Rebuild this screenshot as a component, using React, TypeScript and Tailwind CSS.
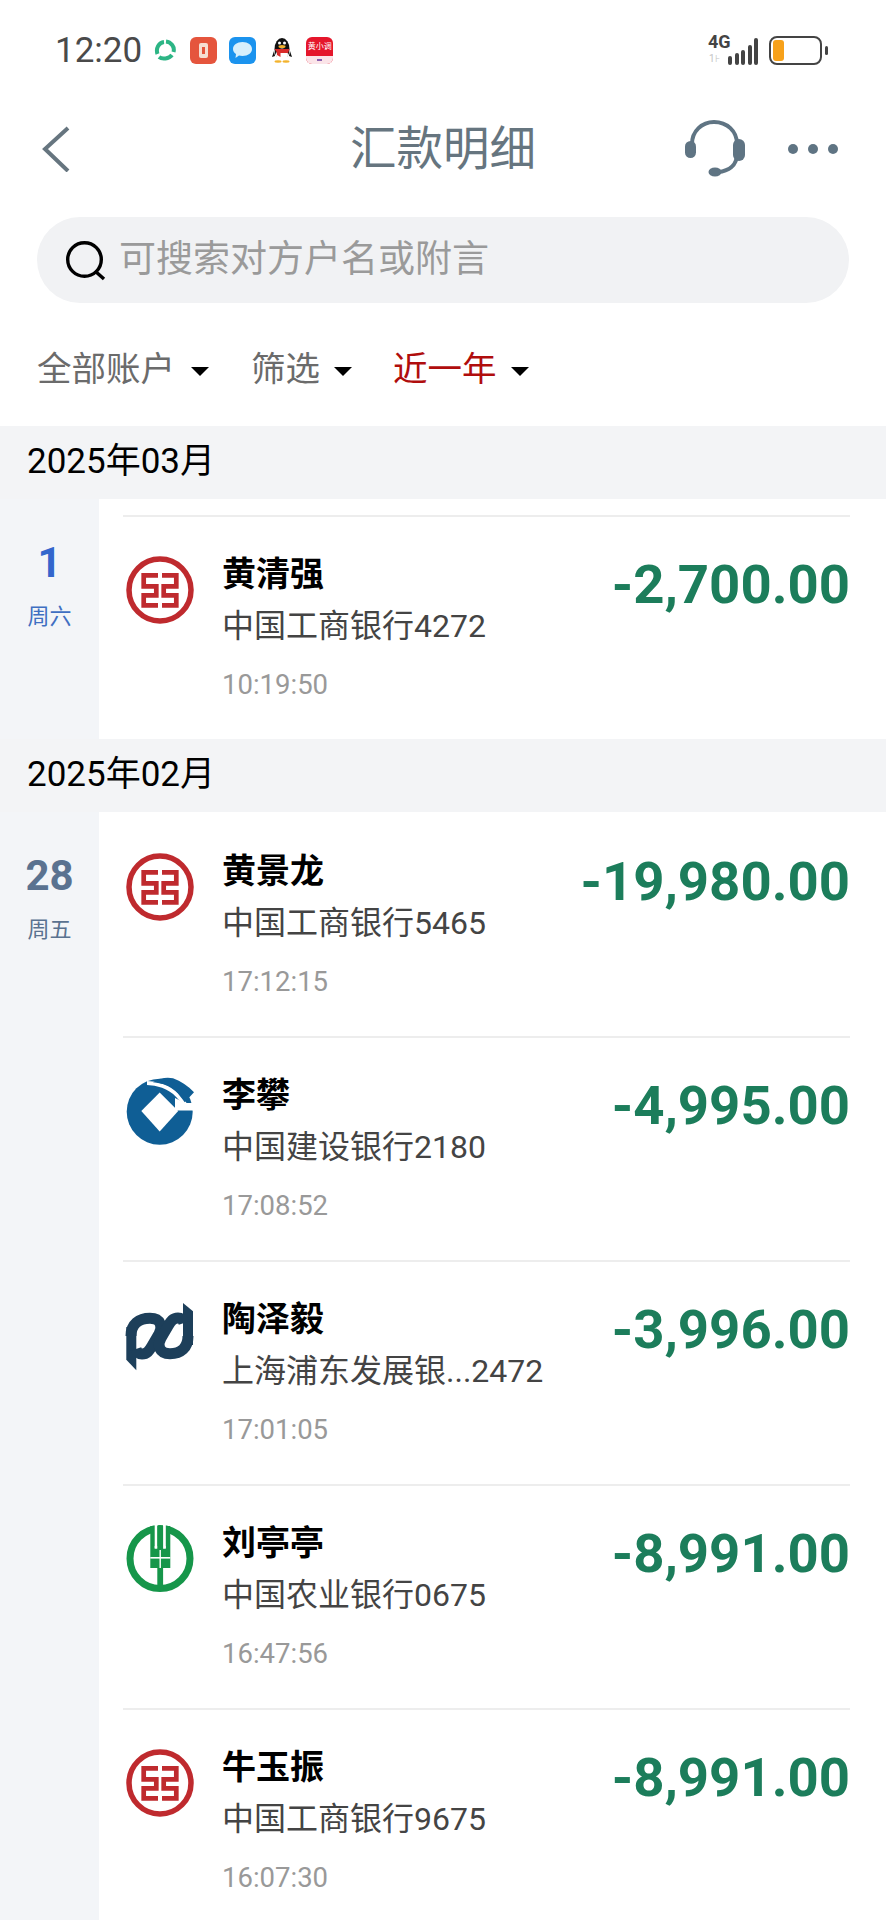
const FONT = "font-['Roboto','Noto_Sans_CJK_SC',sans-serif]";

function IcbcLogo() {
  return (
    <svg width="70" height="70" viewBox="0 0 70 70" fill="none">
      <circle cx="35" cy="35" r="31" stroke="#bf2a2e" strokeWidth="5.5" />
      <path
        d="M33 20.3H18.7V31.3H31.3V40.3H18.7V50.3H33M37 20.3H51.3V31.3H38.7V40.3H51.3V50.3H37"
        stroke="#bf2a2e"
        strokeWidth="4.7"
      />
    </svg>
  );
}

function CcbLogo() {
  return (
    <svg width="70" height="70" viewBox="0 0 70 70" fill="none">
      <circle cx="34.7" cy="35.7" r="33" fill="#0f5e95" />
      <path d="M50 22L60 27H72V34.5H50Z" fill="#fff" />
      <path d="M22 7C32 7 44 11 52 19L60 28" stroke="#fff" strokeWidth="4" />
      <path d="M28 6.3C34 2 42 1 48 2.3C56 5 63 10 69 16.3L59.7 26.3C54 18 48 11 43 9.7C38 7.5 33 7 28 6.3Z" fill="#0f5e95" />
      <path d="M34.7 16.5L53.2 35L34.7 55.5L16.3 35Z" fill="#fff" />
    </svg>
  );
}

function SpdbLogo() {
  return (
    <svg width="70" height="72" viewBox="0 0 70 72" fill="none">
      <path d="M1.3 27H11.3V70.3L1.3 59.7Z" fill="#1d3f5a" />
      <path d="M58 3L68 11.3V45H58Z" fill="#1d3f5a" />
      <path
        d="M6 36C6 24 14 18.3 25 18.3C36 18.3 38 27 34 34L27 46C24 51 22 54 17 54C14 54 12 52 11 49"
        stroke="#1d3f5a"
        strokeWidth="11"
      />
      <path
        d="M63 36C63 48 56 53.7 45 53.7C34 53.7 32 45 36 38L43 26C46 21 48 18 53 18C56 18 58 20 59 23"
        stroke="#1d3f5a"
        strokeWidth="11"
      />
    </svg>
  );
}

function AbcLogo() {
  return (
    <svg width="70" height="70" viewBox="0 0 70 70">
      <circle cx="35" cy="34.5" r="30" fill="none" stroke="#16964a" strokeWidth="7" />
      <rect x="25.3" y="2" width="20" height="42" fill="#16964a" />
      <rect x="29.7" y="1" width="2.8" height="23.5" fill="#fff" />
      <rect x="38" y="1" width="2.8" height="23.5" fill="#fff" />
      <rect x="29.7" y="22" width="11" height="2.5" fill="#fff" />
      <rect x="32.3" y="2" width="5.8" height="24" fill="#16964a" />
      <rect x="32.3" y="43" width="5.8" height="24" fill="#16964a" />
      <rect x="25.3" y="33" width="20" height="1.6" fill="#fff" />
      <rect x="34.5" y="26" width="1.4" height="18" fill="#fff" />
    </svg>
  );
}

function StatusIcons() {
  return (
    <div className="flex items-center ml-[12px]">
      <svg width="22" height="22" viewBox="0 0 22 22" fill="none" stroke="#2db585" strokeWidth="4">
        <path d="M3.5 15C1.5 9 5 3.5 10 3" />
        <path d="M12 2.5C17 3 21 8 19.5 13" />
        <path d="M18 16C15 20 8 20.5 5 18" />
      </svg>
      <div className="ml-[14px] w-[27px] h-[27px] rounded-[6px] bg-[#e5553d] flex items-center justify-center">
        <div className="w-[9px] h-[15px] rounded-[2px] bg-[#f6ded3] flex items-center justify-center">
          <div className="w-[3px] h-[7px] bg-[#e5553d]" />
        </div>
      </div>
      <div className="ml-[12px] w-[27px] h-[27px] rounded-[6px] bg-[#1b93ee] flex items-center justify-center">
        <svg width="21" height="18" viewBox="0 0 21 18">
          <path d="M10.5 1C16 1 20 4 20 8C20 12 16 15 10.5 15C9 15 8 14.8 7 14.5L3.5 17L4 13C2 11.8 1 10 1 8C1 4 5 1 10.5 1Z" fill="#d7effc" />
        </svg>
      </div>
      <svg className="ml-[15px]" width="22" height="26" viewBox="0 0 22 26">
        <ellipse cx="11" cy="12" rx="7.5" ry="11" fill="#111" />
        <path d="M3 14L1 20L4 19ZM19 14L21 20L18 19Z" fill="#111" />
        <ellipse cx="11" cy="18" rx="6" ry="6.5" fill="#fff" />
        <path d="M3.5 12H18.5L17 16H9.5V20L6 18V15.5Z" fill="#d92b2b" />
        <ellipse cx="11" cy="9.5" rx="3.5" ry="1.5" fill="#f3b32d" />
        <circle cx="8.5" cy="6" r="1.5" fill="#fff" />
        <circle cx="13.5" cy="6" r="1.5" fill="#fff" />
        <ellipse cx="7" cy="24.5" rx="3.5" ry="1.2" fill="#f3b32d" />
        <ellipse cx="15" cy="24.5" rx="3.5" ry="1.2" fill="#f3b32d" />
      </svg>
      <div className="ml-[13px] w-[27px] h-[27px] rounded-[6px] overflow-hidden bg-[#e5162b] flex flex-col items-center">
        <span className="text-[8px] leading-[19px] text-white">黄小调</span>
        <div className="w-full h-[8px] bg-[#fbe4e8] flex items-center justify-center">
          <div className="w-[5px] h-[2px] bg-[#8a5fb0]" />
        </div>
      </div>
    </div>
  );
}

function NetworkIcons() {
  return (
    <div className="flex items-center">
      <div className="relative w-[50px] h-[30px]">
        <span className="absolute left-0 top-[-3px] text-[18px] leading-[19px] font-bold text-[#444]">4G</span>
        <span className="absolute left-[1px] top-[18px] text-[10px] leading-[11px] text-[#c4c4c4]">1⊦</span>
        <div className="absolute right-0 bottom-0 flex items-end gap-[2.5px]">
          <div className="w-[4px] h-[9px] rounded-full bg-[#444]" />
          <div className="w-[4px] h-[12px] rounded-full bg-[#444]" />
          <div className="w-[4px] h-[15px] rounded-full bg-[#444]" />
          <div className="w-[4px] h-[20px] rounded-full bg-[#444]" />
          <div className="w-[4px] h-[27px] rounded-full bg-[#444]" />
        </div>
      </div>
      <div className="ml-[11px] w-[53px] h-[29px] rounded-[8px] border-[2px] border-[#444] p-[2px] bg-white">
        <div className="w-[11px] h-full rounded-[3px] bg-[#f7a11a]" />
      </div>
      <div className="ml-[3px] w-[3px] h-[9px] rounded-full bg-[#444]" />
    </div>
  );
}

function Headset() {
  return (
    <svg width="60" height="58" viewBox="0 0 60 58" fill="none">
      <path d="M7 30V24C7 11 17 2 29 2C42 2 52 11 52 24V34C52 46 43 51 33 52" stroke="#5f7483" strokeWidth="4" />
      <rect x="0" y="21" width="11" height="17" rx="5.5" fill="#5f7483" />
      <rect x="48" y="19" width="12" height="22" rx="6" fill="#5f7483" />
      <ellipse cx="30" cy="52" rx="6.5" ry="4.5" fill="#5f7483" />
    </svg>
  );
}

function Caret() {
  return <div className="w-0 h-0 border-x-[9px] border-x-transparent border-t-[9px] border-t-black mt-[3px]" />;
}

interface Transfer {
  name: string;
  bank: string;
  time: string;
  amount: string;
  logo: React.ReactNode;
}

function TransferRow({ t, divider }: { t: Transfer; divider: boolean }) {
  return (
    <div className={`h-[224px] flex ${divider ? 'border-t-2 border-[#ededed]' : ''}`}>
      <div className={`${divider ? 'mt-[38px]' : 'mt-[40px]'} ml-[2px] w-[70px] h-[70px]`}>{t.logo}</div>
      <div className={`${divider ? 'mt-[31px]' : 'mt-[33px]'} ml-[27px] flex-1 min-w-0`}>
        <div className="text-[34px] leading-[52px] font-bold text-black">{t.name}</div>
        <div className="text-[32px] leading-[52px] text-[#444]">{t.bank}</div>
        <div className="text-[27.5px] leading-[40px] mt-[13px] text-[#999]">{t.time}</div>
      </div>
      <div className={`${divider ? 'mt-[35px]' : 'mt-[37px]'} text-[54.5px] leading-[64px] font-bold text-[#1c7d5b]`}>
        {t.amount}
      </div>
    </div>
  );
}

function DayGroup({
  day,
  week,
  dayClass,
  weekClass,
  rows,
  topDivider,
}: {
  day: string;
  week: string;
  dayClass: string;
  weekClass: string;
  rows: Transfer[];
  topDivider?: boolean;
}) {
  return (
    <div className="flex bg-[#f3f5f8]">
      <div className="w-[99px] shrink-0 flex flex-col items-center pt-[36px]">
        <div className={`text-[42px] leading-[56px] font-bold ${dayClass}`}>{day}</div>
        <div className={`text-[22px] leading-[30px] mt-[11px] ${weekClass}`}>{week}</div>
      </div>
      <div className={`flex-1 bg-white pl-[24px] pr-[36px] ${topDivider ? 'pt-[16px]' : ''}`}>
        {rows.map((t, i) => (
          <TransferRow key={t.time} t={t} divider={i > 0 || !!topDivider} />
        ))}
      </div>
    </div>
  );
}

function MonthHeader({ label }: { label: string }) {
  return (
    <div className="h-[73px] pl-[27px] flex items-center bg-[#f3f4f6] text-[35px] text-black">{label}</div>
  );
}

export default function App() {
  const march: Transfer[] = [
    { name: '黄清强', bank: '中国工商银行4272', time: '10:19:50', amount: '-2,700.00', logo: <IcbcLogo /> },
  ];
  const february: Transfer[] = [
    { name: '黄景龙', bank: '中国工商银行5465', time: '17:12:15', amount: '-19,980.00', logo: <IcbcLogo /> },
    { name: '李攀', bank: '中国建设银行2180', time: '17:08:52', amount: '-4,995.00', logo: <CcbLogo /> },
    { name: '陶泽毅', bank: '上海浦东发展银...2472', time: '17:01:05', amount: '-3,996.00', logo: <SpdbLogo /> },
    { name: '刘亭亭', bank: '中国农业银行0675', time: '16:47:56', amount: '-8,991.00', logo: <AbcLogo /> },
    { name: '牛玉振', bank: '中国工商银行9675', time: '16:07:30', amount: '-8,991.00', logo: <IcbcLogo /> },
  ];

  return (
    <div className={`h-[1920px] w-[886px] overflow-hidden bg-white ${FONT}`}>
      {/* Status bar */}
      <div className="h-[100px] pl-[55px] pr-[58px] flex items-center justify-between">
        <div className="flex items-center">
          <span className="text-[35px] leading-none text-[#4a4a4a]">12:20</span>
          <StatusIcons />
        </div>
        <NetworkIcons />
      </div>

      {/* Header */}
      <div className="h-[98px] px-[42px] grid grid-cols-[1fr_auto_1fr] items-center">
        <svg width="28" height="46" viewBox="0 0 28 46" fill="none" stroke="#66757f" strokeWidth="4">
          <path d="M26 2L3 23L26 45" />
        </svg>
        <div className="text-[46.5px] leading-none text-[#66757f]">汇款明细</div>
        <div className="flex items-center justify-end gap-[43px] pr-[6px]">
          <Headset />
          <div className="flex gap-[10px]">
            <div className="w-[10px] h-[10px] rounded-full bg-[#5f7483]" />
            <div className="w-[10px] h-[10px] rounded-full bg-[#5f7483]" />
            <div className="w-[10px] h-[10px] rounded-full bg-[#5f7483]" />
          </div>
        </div>
      </div>

      {/* Search */}
      <div className="mt-[19px] mx-[37px] h-[86px] rounded-[43px] bg-[#f1f2f4] pl-[28px] flex items-center">
        <svg width="41" height="41" viewBox="0 0 41 41" fill="none" stroke="#000" strokeWidth="3.4">
          <circle cx="19.5" cy="19.5" r="16.8" />
          <path d="M30 31L39 39" />
        </svg>
        <span className="ml-[13px] text-[37px] text-[#9a9a9a]">可搜索对方户名或附言</span>
      </div>

      {/* Filters */}
      <div className="h-[123px] pl-[37px] pt-[10px] flex items-center text-[34.5px]">
        <span className="text-[#6b6b6b]">全部账户</span>
        <div className="ml-[16px]"><Caret /></div>
        <span className="ml-[42px] text-[#6b6b6b]">筛选</span>
        <div className="ml-[14px]"><Caret /></div>
        <span className="ml-[41px] text-[#b00d0d]">近一年</span>
        <div className="ml-[14px]"><Caret /></div>
      </div>

      <MonthHeader label="2025年03月" />
      <DayGroup day="1" week="周六" dayClass="text-[#3366cc]" weekClass="text-[#3f6fc2]" rows={march} topDivider />
      <MonthHeader label="2025年02月" />
      <DayGroup day="28" week="周五" dayClass="text-[#5a7290]" weekClass="text-[#5a7290]" rows={february} />
    </div>
  );
}
